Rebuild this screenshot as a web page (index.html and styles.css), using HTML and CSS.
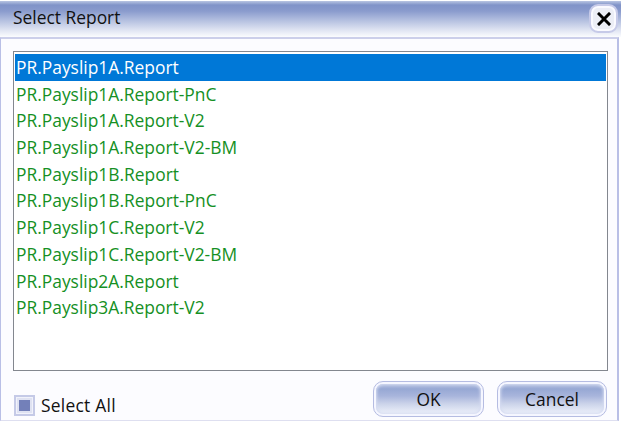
FILE: index.html
```
<!DOCTYPE html>
<html lang="en">
<head>
<meta charset="utf-8">
<title>Select Report</title>
<link rel="stylesheet" href="styles.css">
</head>
<body>
<div class="dialog">
  <header class="titlebar">
    <span class="label title">Select Report</span>
    <button class="close" aria-label="Close"><svg width="14" height="14" viewBox="0 0 14 14"><path d="M2 2L12 12M12 2L2 12" fill="none" stroke="#000" stroke-width="3" stroke-linecap="square"/></svg></button>
  </header>
  <main class="body">
    <ul class="list">
      <li class="row selected"><span class="label">PR.Payslip1A.Report</span></li>
      <li class="row"><span class="label">PR.Payslip1A.Report-PnC</span></li>
      <li class="row"><span class="label">PR.Payslip1A.Report-V2</span></li>
      <li class="row"><span class="label">PR.Payslip1A.Report-V2-BM</span></li>
      <li class="row"><span class="label">PR.Payslip1B.Report</span></li>
      <li class="row"><span class="label">PR.Payslip1B.Report-PnC</span></li>
      <li class="row"><span class="label">PR.Payslip1C.Report-V2</span></li>
      <li class="row"><span class="label">PR.Payslip1C.Report-V2-BM</span></li>
      <li class="row"><span class="label">PR.Payslip2A.Report</span></li>
      <li class="row"><span class="label">PR.Payslip3A.Report-V2</span></li>
    </ul>
    <footer class="actions">
      <div class="check"><span class="box"></span><span class="label all">Select All</span></div>
      <button class="button"><span class="face">OK</span></button>
      <button class="button cancel"><span class="face">Cancel</span></button>
    </footer>
  </main>
</div>
</body>
</html>
```
FILE: styles.css
```
* { box-sizing: border-box; }
body {
  margin: 0;
  background: #fff;
  color: #111;
  font: 17.4px/24px "Open Sans", "Noto Sans", sans-serif;
  overflow: hidden;
}
.dialog { width: 621px; height: 422px; padding-top: 1px; }
.titlebar {
  height: 36px;
  display: flex;
  justify-content: space-between;
  padding: 3px 3px 0 13px;
  background: linear-gradient(#b9c5e2 0, #8093c8 4px, #8a9bcd 10px, #b7c2e1 20px, #dfe4f2 29px, #fbfcfe 36px);
}
.label { white-space: nowrap; }
.title { margin-top: 1px; }
.all { letter-spacing: .25px; }
.close {
  width: 29px;
  height: 29px;
  padding: 0;
  display: flex;
  align-items: center;
  justify-content: center;
  border: 2px solid #c6cae8;
  border-radius: 9px;
  background: #eceef6;
  box-shadow: inset 0 0 0 2px #fafaff;
}
.body {
  width: 619px;
  height: 384px;
  padding: 12px 10px 0 12px;
  border: solid #b9bfe6;
  border-width: 2px 2px 1px 1px;
  border-top-color: #cccfea;
  border-bottom-color: #dedff0;
  background: #fcfcff;
}
.list {
  width: 595px;
  height: 320px;
  margin: 0;
  padding: 2px 1px;
  list-style: none;
  border: 1px solid #83878f;
  background: #fff;
}
.row {
  height: 26.7px;
  padding: 1px 0 0 1px;
  color: #159024;
}
.selected { background: #0078d7; color: #fff; }
.actions { display: flex; padding-top: 10px; }
.check { width: 360px; flex: none; display: flex; align-items: center; padding: 12px 0 0 1px; }
.box {
  width: 21px;
  height: 21px;
  margin-right: 6px;
  border: 2px solid #c5cae7;
  background: #7380b9;
  box-shadow: inset 0 0 0 1px #f1f2fb, inset 0 0 0 3px #dfe2f2;
}
.button {
  width: 111px;
  flex: none;
  height: 36px;
  padding: 2px;
  border: 1px solid #b5bce2;
  border-radius: 10px;
  background: #f5f6ff;
  font: inherit;
  color: inherit;
}
.cancel { width: 110px; margin-left: 13px; }
.face {
  height: 100%;
  display: flex;
  align-items: center;
  justify-content: center;
  border-radius: 7px;
  background: linear-gradient(#b4c0e0 0, #97a8d4 5px, #a8b5dc 12px, #ccd4ea 20px, #eff2fb 30px);
  box-shadow: inset 0 0 3px 1px #d5dbf1;
}
```
